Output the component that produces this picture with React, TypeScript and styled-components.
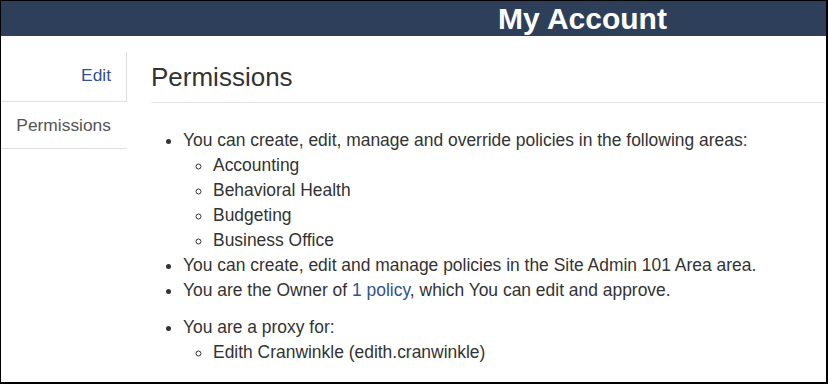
import React from "react";
import styled, { createGlobalStyle } from "styled-components";

const Global = createGlobalStyle`
  html, body { margin: 0; padding: 0; background: #fff; }
  * { box-sizing: border-box; }
  body { font-family: "Liberation Sans", Arial, sans-serif; color: #333; }
`;

const Frame = styled.div`
  width: 828px;
  height: 384px;
  border-top: 1px solid #000;
  border-left: 1px solid #000;
  border-right: 2px solid #000;
  border-bottom: 2px solid #000;
  display: flex;
  flex-direction: column;
  overflow: hidden;
`;

const Header = styled.header`
  height: 35px;
  background: #2e4059;
  display: flex;
  align-items: center;
  padding-left: 497px;
`;

const Title = styled.h1`
  margin: 0;
  font-size: 30px;
  line-height: 35px;
  font-weight: 700;
  color: #fff;
`;

const Body = styled.div`
  display: flex;
  flex: 1;
`;

const Sidebar = styled.nav`
  width: 126px;
  flex: none;
  margin-top: 16px;
  display: flex;
  flex-direction: column;
`;

const Tab = styled.a<{ $active?: boolean }>`
  display: block;
  text-align: right;
  font-size: 17.4px;
  line-height: 25px;
  padding: 11px 15px ${(p) => (p.$active ? "10px" : "13px")} 15px;
  border-bottom: 1px solid #ddd;
  border-right: 1px solid ${(p) => (p.$active ? "transparent" : "#ddd")};
  color: ${(p) => (p.$active ? "#555" : "#34508f")};
  text-decoration: none;
  cursor: pointer;
`;

const Main = styled.main`
  flex: 1;
  margin-left: 24px;
  padding-top: 27px;
`;

const PageHeader = styled.h2`
  margin: 0;
  font-size: 26px;
  font-weight: 400;
  line-height: 28.6px;
  padding-bottom: 10px;
  border-bottom: 1px solid #e5e5e5;
  color: #333;
`;

const List = styled.ul<{ $gap?: number }>`
  margin: ${(p) => p.$gap ?? 0}px 0 0 0;
  padding-left: 32px;
  list-style: disc;
  font-size: 17.45px;
  line-height: 25px;
`;

const SubList = styled.ul`
  margin: 0;
  padding-left: 30px;
  list-style: circle;
`;

const Link = styled.a`
  color: #34508f;
  text-decoration: none;
`;

const areas = ["Accounting", "Behavioral Health", "Budgeting", "Business Office"];

export default function App() {
  return (
    <>
      <Global />
      <Frame>
        <Header>
          <Title>My Account</Title>
        </Header>
        <Body>
          <Sidebar>
            <Tab>Edit</Tab>
            <Tab $active>Permissions</Tab>
          </Sidebar>
          <Main>
            <PageHeader>Permissions</PageHeader>
            <List $gap={25}>
              <li>
                You can create, edit, manage and override policies in the following areas:
                <SubList>
                  {areas.map((a) => (
                    <li key={a}>{a}</li>
                  ))}
                </SubList>
              </li>
              <li>You can create, edit and manage policies in the Site Admin 101 Area area.</li>
              <li>
                You are the Owner of <Link>1 policy</Link>, which You can edit and approve.
              </li>
            </List>
            <List $gap={12}>
              <li>
                You are a proxy for:
                <SubList>
                  <li>Edith Cranwinkle (edith.cranwinkle)</li>
                </SubList>
              </li>
            </List>
          </Main>
        </Body>
      </Frame>
    </>
  );
}
